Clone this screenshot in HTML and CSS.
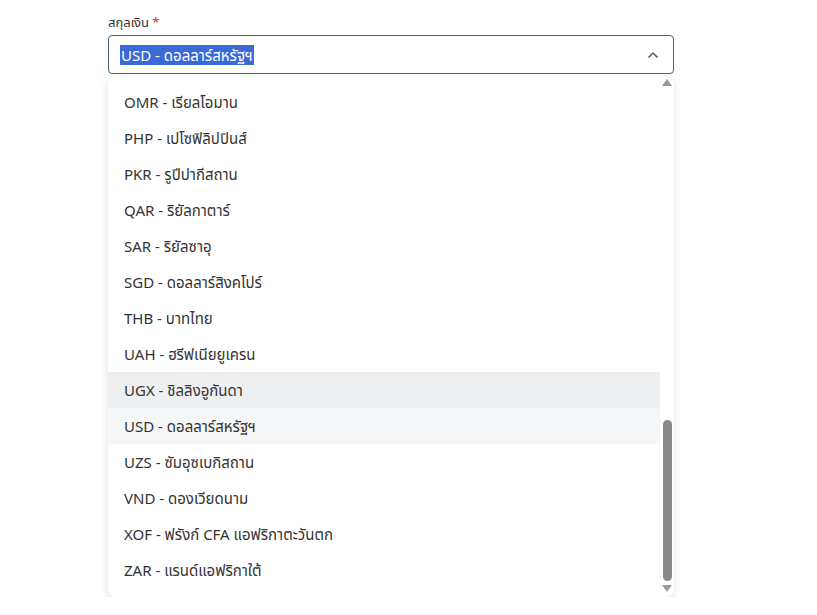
FILE: index.html
```html
<!DOCTYPE html>
<html lang="th">
<head>
  <meta charset="UTF-8">
  <meta name="viewport" content="width=device-width, initial-scale=1.0">
  <title>สกุลเงิน</title>
  <link rel="stylesheet" href="styles.css">
</head>
<body>
  <div class="field">
    <label class="field-label">สกุลเงิน <span class="req">*</span></label>
    <div class="select-box">
      <span class="select-value">USD - ดอลลาร์สหรัฐฯ</span>
      <svg class="chevron" width="12" height="8" viewBox="0 0 12 8">
        <path d="M1.5 6.5 L6 2 L10.5 6.5" fill="none" stroke="#555" stroke-width="1.5"/>
      </svg>
    </div>

    <div class="dropdown">
      <ul class="options">
        <li>OMR - เรียลโอมาน</li>
        <li>PHP - เปโซฟิลิปปินส์</li>
        <li>PKR - รูปีปากีสถาน</li>
        <li>QAR - ริยัลกาตาร์</li>
        <li>SAR - ริยัลซาอุ</li>
        <li>SGD - ดอลลาร์สิงคโปร์</li>
        <li>THB - บาทไทย</li>
        <li>UAH - ฮรีฟเนียยูเครน</li>
        <li class="hover">UGX - ชิลลิงอูกันดา</li>
        <li class="selected">USD - ดอลลาร์สหรัฐฯ</li>
        <li>UZS - ซัมอุซเบกิสถาน</li>
        <li>VND - ดองเวียดนาม</li>
        <li>XOF - ฟรังก์ CFA แอฟริกาตะวันตก</li>
        <li>ZAR - แรนด์แอฟริกาใต้</li>
      </ul>
      <div class="scrollbar">
        <span class="arrow up"></span>
        <div class="track">
          <div class="thumb"></div>
        </div>
        <span class="arrow down"></span>
      </div>
    </div>
  </div>
</body>
</html>
```

FILE: styles.css
```css
* {
  box-sizing: border-box;
}

body {
  margin: 0;
  padding: 14px 0 0 108px;
  background-color: #fff;
  font-family: "Noto Sans", "Noto Sans Thai", Roboto, sans-serif;
  color: #333;
}

.field {
  width: 566px;
}

.field-label {
  display: block;
  font-size: 13px;
  line-height: 16px;
  color: #333;
  margin-bottom: 5px;
}

.req {
  color: #d93025;
}

.select-box {
  display: flex;
  align-items: center;
  justify-content: space-between;
  height: 39px;
  padding: 0 14px 0 11px;
  border: 1px solid #4b6272;
  border-radius: 4px;
}

.select-value {
  font-size: 15px;
  line-height: 20px;
  color: #fff;
  background-color: #3b6ad6;
  padding: 0 1px;
}

.dropdown {
  display: flex;
  margin-top: 3px;
  height: 520px;
  border-radius: 8px;
  background-color: #fff;
  box-shadow: 0 2px 8px rgba(0, 0, 0, 0.12);
  overflow: hidden;
}

.options {
  flex: 1;
  list-style: none;
  margin: 0;
  padding: 7px 0 0;
}

.options li {
  height: 36px;
  line-height: 36px;
  padding-left: 16px;
  font-size: 15px;
  color: #333;
}

.options li.hover {
  background-color: #eeeff1;
}

.options li.selected {
  background-color: #f5f6f7;
}

.scrollbar {
  width: 14px;
  display: flex;
  flex-direction: column;
  align-items: center;
  padding: 2px 0 5px;
}

.arrow {
  width: 0;
  height: 0;
  border-left: 5px solid transparent;
  border-right: 5px solid transparent;
}

.arrow.up {
  border-bottom: 7px solid #9a9a9a;
}

.arrow.down {
  border-top: 7px solid #9a9a9a;
}

.track {
  flex: 1;
  width: 100%;
  display: flex;
  flex-direction: column;
  justify-content: flex-end;
  align-items: center;
  padding: 0 0 4px;
}

.thumb {
  width: 9px;
  height: 161px;
  border-radius: 5px;
  background-color: #8a8a8a;
}
```
